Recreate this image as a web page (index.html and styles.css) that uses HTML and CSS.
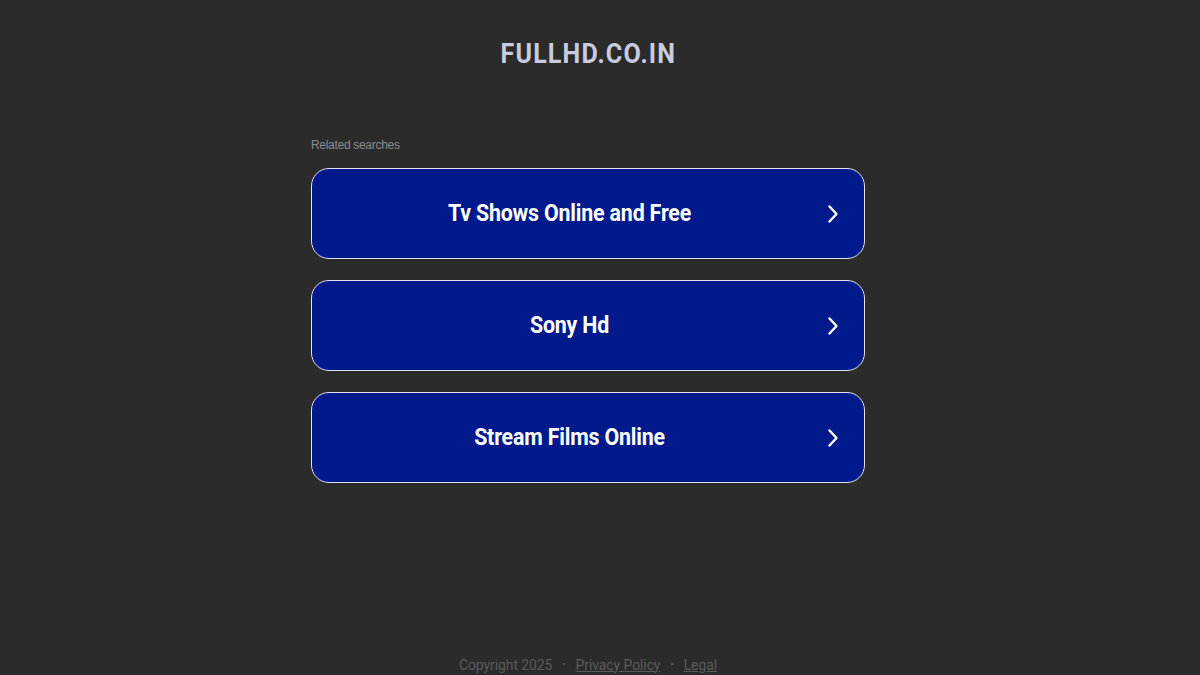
FILE: index.html
```html
<!DOCTYPE html>
<html>
<head>
<meta charset="utf-8">
<link rel="stylesheet" href="styles.css">
</head>
<body>
<div class="page">
  <header class="domain">FULLHD.CO.IN</header>
  <main class="content">
    <div class="label">Related searches</div>
    <div class="list">
      <a class="item" href="#"><span class="txt">Tv Shows Online and Free</span><svg class="chev" viewBox="0 0 12 20" width="12" height="20"><path d="M2.5 2.5 L9.5 10 L2.5 17.5" fill="none" stroke="#fff" stroke-width="2.4" stroke-linecap="round" stroke-linejoin="round"/></svg></a>
      <a class="item" href="#"><span class="txt">Sony Hd</span><svg class="chev" viewBox="0 0 12 20" width="12" height="20"><path d="M2.5 2.5 L9.5 10 L2.5 17.5" fill="none" stroke="#fff" stroke-width="2.4" stroke-linecap="round" stroke-linejoin="round"/></svg></a>
      <a class="item" href="#"><span class="txt">Stream Films Online</span><svg class="chev" viewBox="0 0 12 20" width="12" height="20"><path d="M2.5 2.5 L9.5 10 L2.5 17.5" fill="none" stroke="#fff" stroke-width="2.4" stroke-linecap="round" stroke-linejoin="round"/></svg></a>
    </div>
  </main>
  <footer class="footer">
    <span>Copyright 2025</span><span class="dot">•</span><a href="#">Privacy Policy</a><span class="dot">•</span><a href="#">Legal</a>
  </footer>
</div>
</body>
</html>
```
FILE: styles.css
```css
html, body {
  margin: 0;
  padding: 0;
  background: #2b2b2b;
}
.page {
  width: 1200px;
  height: 675px;
  display: flex;
  flex-direction: column;
  align-items: center;
  font-family: Roboto, "Liberation Sans", sans-serif;
  position: relative;
}
.domain {
  margin-top: 37px;
  height: 34px;
  font-size: 27px;
  font-weight: 700;
  color: #c9cbdf;
  letter-spacing: 1.2px;
  transform: scaleX(0.93);
  line-height: 34px;
  margin-left: -24px;
}
.content {
  width: 554px;
  margin-top: 65px;
  margin-left: -24px;
}
.label {
  font-family: "Liberation Sans", Arial, sans-serif;
  font-size: 12px;
  color: #8c8c8c;
  letter-spacing: -0.3px;
  line-height: 16px;
  height: 16px;
  margin-left: 0;
  padding-top: 1px;
}
.list {
  margin-top: 15px;
  display: flex;
  flex-direction: column;
  gap: 21px;
}
.item {
  box-sizing: border-box;
  height: 91px;
  border: 1.6px solid #e2e2ea;
  border-radius: 18px;
  background: #001a8b;
  display: flex;
  align-items: center;
  padding: 0 25px 2px 0;
  text-decoration: none;
}
.txt {
  flex: 1;
  text-align: center;
  color: #fff;
  font-size: 24px;
  font-weight: 700;
  transform: scaleX(0.89);
  letter-spacing: -0.2px;
}
.chev {
  flex: none;
  display: block;
  margin-top: 2px;
}
.footer {
  position: absolute;
  bottom: 0;
  left: 0;
  right: 0;
  height: 21px;
  display: flex;
  justify-content: center;
  align-items: center;
  gap: 10px;
  font-size: 14px;
  color: #5a5a5a;
  letter-spacing: -0.1px;
  transform: translateX(-12px);
}
.footer a {
  color: #5a5a5a;
  text-decoration: underline;
}
.dot {
  font-size: 10px;
}
```
